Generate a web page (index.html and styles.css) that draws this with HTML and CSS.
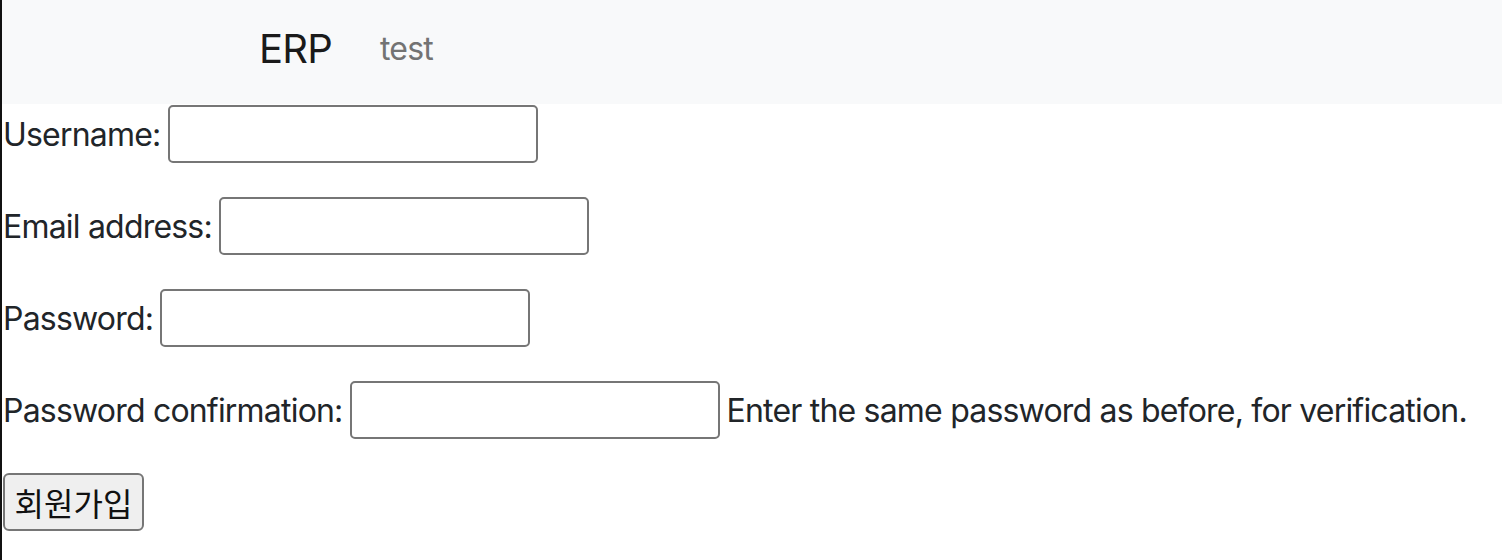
FILE: index.html
```html
<!DOCTYPE html>
<html lang="ko">
<head>
  <meta charset="UTF-8">
  <meta name="viewport" content="width=device-width, initial-scale=1.0">
  <title>ERP - 회원가입</title>
  <link rel="stylesheet" href="styles.css">
</head>
<body>
  <nav class="navbar">
    <a class="brand" href="#">ERP</a>
    <a class="nav-link" href="#">test</a>
  </nav>
  <form class="signup" method="post">
    <div class="field">
      <label for="id_username">Username:</label>
      <input type="text" id="id_username" name="username">
    </div>
    <div class="field">
      <label for="id_email">Email address:</label>
      <input type="email" id="id_email" name="email">
    </div>
    <div class="field">
      <label for="id_password1">Password:</label>
      <input type="password" id="id_password1" name="password1">
    </div>
    <div class="field">
      <label for="id_password2">Password confirmation:</label>
      <input type="password" id="id_password2" name="password2">
      <span class="helptext">Enter the same password as before, for verification.</span>
    </div>
    <button type="submit" class="submit">회원가입</button>
  </form>
</body>
</html>
```

FILE: styles.css
```css
* {
  margin: 0;
  padding: 0;
  box-sizing: border-box;
}

body {
  font-family: Inter, "Noto Sans", "Noto Sans CJK KR", sans-serif;
  font-size: 32px;
  letter-spacing: -0.8px;
  color: #212529;
  background-color: #fff;
  border-left: 2px solid #111;
  min-height: 100vh;
}

.navbar {
  height: 104px;
  background-color: #f8f9fa;
  display: flex;
  align-items: center;
  padding-left: 257px;
  padding-bottom: 8px;
  gap: 48px;
}

.navbar a {
  text-decoration: none;
}

.brand {
  font-size: 40px;
  color: #1a1a1a;
}

.nav-link {
  font-size: 32px;
  color: #737373;
}

.signup {
  padding-top: 1px;
  padding-left: 1px;
  display: flex;
  flex-direction: column;
  align-items: flex-start;
  gap: 34px;
}

.field {
  display: flex;
  align-items: center;
  gap: 7px;
  height: 58px;
  white-space: nowrap;
}

.field input {
  flex: none;
  width: 370px;
  height: 58px;
  border: 2px solid #767676;
  border-radius: 5px;
  font-size: 32px;
  padding: 0 6px;
}

.submit {
  height: 58px;
  width: 141px;
  font-family: "Noto Sans CJK KR", sans-serif;
  font-size: 32px;
  letter-spacing: 0;
  color: #111;
  background-color: #efefef;
  border: 2px solid #767676;
  border-radius: 6px;
}
```
